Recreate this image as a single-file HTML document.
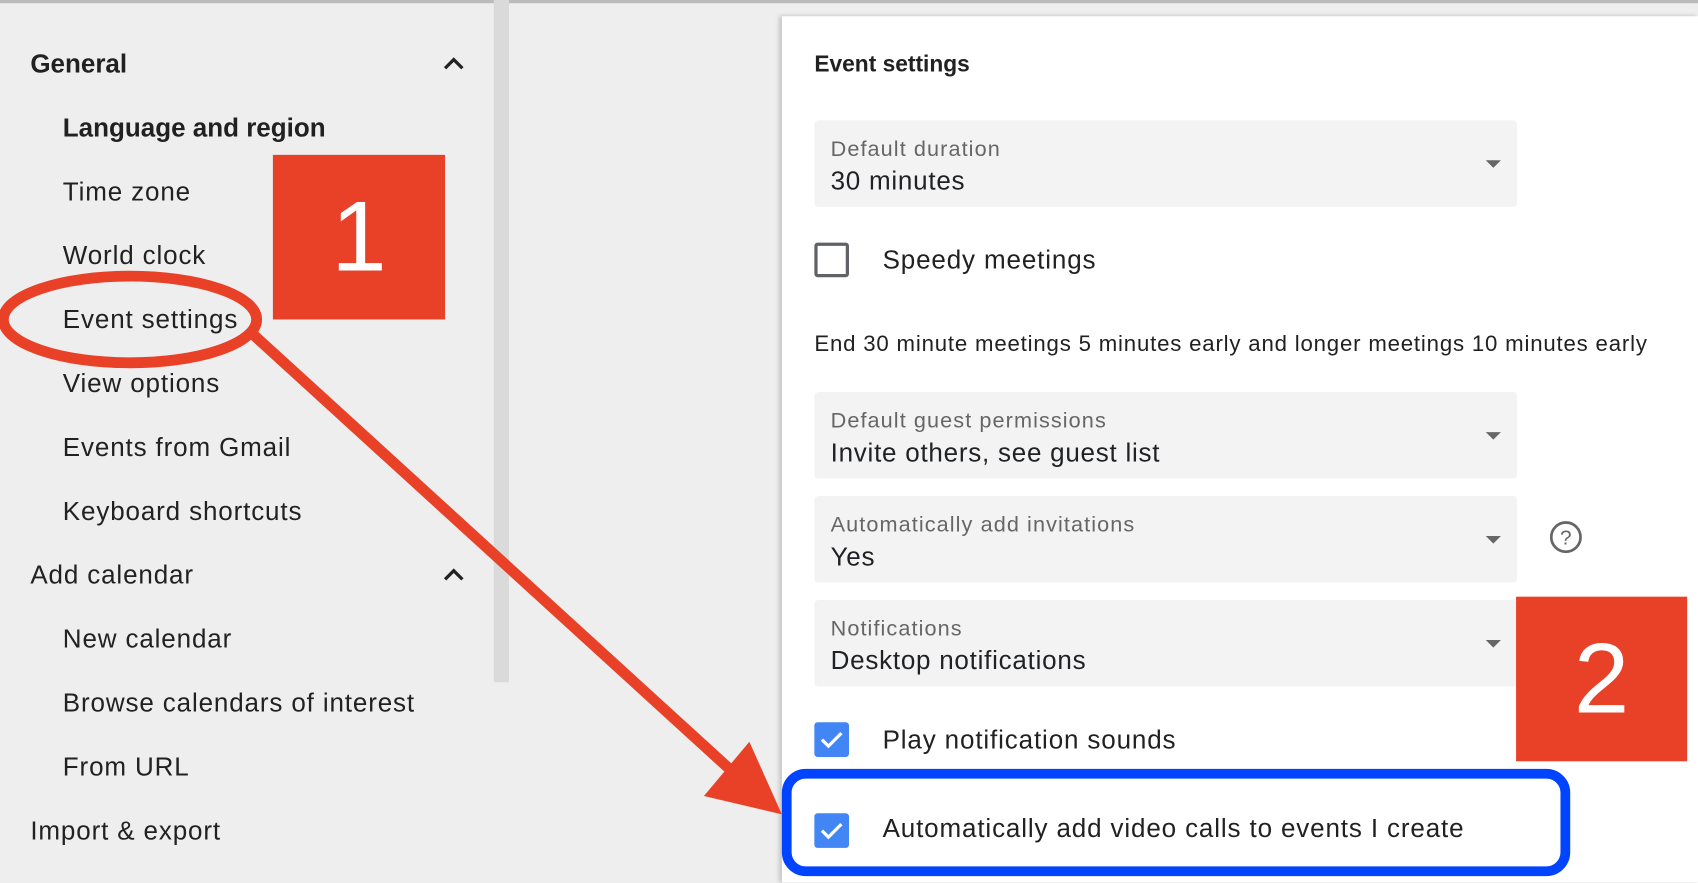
<!DOCTYPE html>
<html><head><meta charset="utf-8"><style>
html,body{margin:0;padding:0;width:1698px;height:882px;overflow:hidden;background:#eee;}
#w{position:absolute;left:0;top:0;width:1568px;height:815px;transform:scale(1.08291);transform-origin:0 0;font-family:"Liberation Sans",sans-serif;color:#212121;}
.a{position:absolute;white-space:nowrap;line-height:1;}
.nav{font-size:24px;letter-spacing:0.8px;}
.b{font-weight:bold;letter-spacing:0;}
.sel{position:absolute;left:752px;width:649px;height:80px;background:#f3f3f3;border-radius:4px;}
.sel .l{position:absolute;left:15px;top:17px;font-size:20px;color:#666;letter-spacing:1px;}
.sel .v{position:absolute;left:15px;top:45px;font-size:24px;color:#202124;letter-spacing:0.7px;}
.sel .t{position:absolute;right:15px;top:37px;width:0;height:0;border-left:7px solid transparent;border-right:7px solid transparent;border-top:7px solid #666;}
.cb{position:absolute;left:752px;width:32px;height:32px;box-sizing:border-box;border-radius:3px;}
.red{position:absolute;background:#e94128;color:#fff;font-size:92px;text-align:center;}
</style></head><body><div id="w">
<div style="position:absolute;left:0;top:0;width:1568px;height:3px;background:#999;opacity:.6"></div>
<div style="position:absolute;left:456px;top:0;width:14px;height:630px;background:#dadada"></div>
<div style="position:absolute;left:722px;top:15px;width:846px;height:800px;background:#fff;box-shadow:-2px 0 4px rgba(0,0,0,.2)"></div>

<div class="a nav b" style="left:28px;top:48px">General</div>
<svg style="position:absolute;left:408px;top:50px" width="22" height="16"><path d="M3 13 L11 5 L19 13" fill="none" stroke="#222" stroke-width="3"/></svg>
<div class="a nav b" style="left:58px;top:107px">Language and region</div>
<div class="a nav" style="left:58px;top:166px">Time zone</div>
<div class="a nav" style="left:58px;top:225px">World clock</div>
<div class="a nav" style="left:58px;top:284px">Event settings</div>
<div class="a nav" style="left:58px;top:343px">View options</div>
<div class="a nav" style="left:58px;top:402px">Events from Gmail</div>
<div class="a nav" style="left:58px;top:461px">Keyboard shortcuts</div>
<div class="a nav" style="left:28px;top:520px">Add calendar</div>
<svg style="position:absolute;left:408px;top:522px" width="22" height="16"><path d="M3 13 L11 5 L19 13" fill="none" stroke="#222" stroke-width="3"/></svg>
<div class="a nav" style="left:58px;top:579px">New calendar</div>
<div class="a nav" style="left:58px;top:638px">Browse calendars of interest</div>
<div class="a nav" style="left:58px;top:697px">From URL</div>
<div class="a nav" style="left:28px;top:756px">Import &amp; export</div>

<div class="red" style="left:252px;top:143px;width:159px;height:152px;line-height:152px">1</div>

<div class="a" style="left:752px;top:49px;font-size:21px;font-weight:bold">Event settings</div>
<div class="sel" style="top:111px"><div class="l a">Default duration</div><div class="v a">30 minutes</div><div class="t"></div></div>
<div class="cb" style="top:224px;border:3px solid #5f6368"></div>
<div class="a" style="left:815px;top:229px;font-size:24px;letter-spacing:0.8px">Speedy meetings</div>
<div class="a" style="left:752px;top:308px;font-size:20.5px;letter-spacing:0.75px">End 30 minute meetings 5 minutes early and longer meetings 10 minutes early</div>
<div class="sel" style="top:362px"><div class="l a">Default guest permissions</div><div class="v a">Invite others, see guest list</div><div class="t"></div></div>
<div class="sel" style="top:458px"><div class="l a">Automatically add invitations</div><div class="v a">Yes</div><div class="t"></div></div>
<svg style="position:absolute;left:1430px;top:480px" width="32" height="32"><circle cx="16" cy="16" r="13.5" fill="none" stroke="#666" stroke-width="2.5"/><text x="16" y="23" text-anchor="middle" font-family="Liberation Sans" font-size="19" fill="#666">?</text></svg>
<div class="sel" style="top:554px"><div class="l a">Notifications</div><div class="v a">Desktop notifications</div><div class="t"></div></div>
<div class="red" style="left:1400px;top:551px;width:158px;height:152px;line-height:152px">2</div>

<div class="cb" style="top:667px;background:#4285f4"><svg width="32" height="32"><path d="M7 16 L13 22 L25 10" fill="none" stroke="#fff" stroke-width="3"/></svg></div>
<div class="a" style="left:815px;top:672px;font-size:24px;letter-spacing:0.8px">Play notification sounds</div>
<div class="cb" style="top:751px;background:#4285f4"><svg width="32" height="32"><path d="M7 16 L13 22 L25 10" fill="none" stroke="#fff" stroke-width="3"/></svg></div>
<div class="a" style="left:815px;top:754px;font-size:24px;letter-spacing:0.8px">Automatically add video calls to events I create</div>
<div style="position:absolute;left:722px;top:710px;width:728px;height:99px;box-sizing:border-box;border:9px solid #0044ff;border-radius:22px"></div>

<svg style="position:absolute;left:0;top:0" width="1568" height="815">
<ellipse cx="120" cy="295" rx="117" ry="40" fill="none" stroke="#e94128" stroke-width="10"/>
<line x1="235" y1="310" x2="690" y2="725" stroke="#e94128" stroke-width="10"/>
<polygon points="650,735 692,685 722,752" fill="#e94128"/>
</svg>
</div></body></html>
